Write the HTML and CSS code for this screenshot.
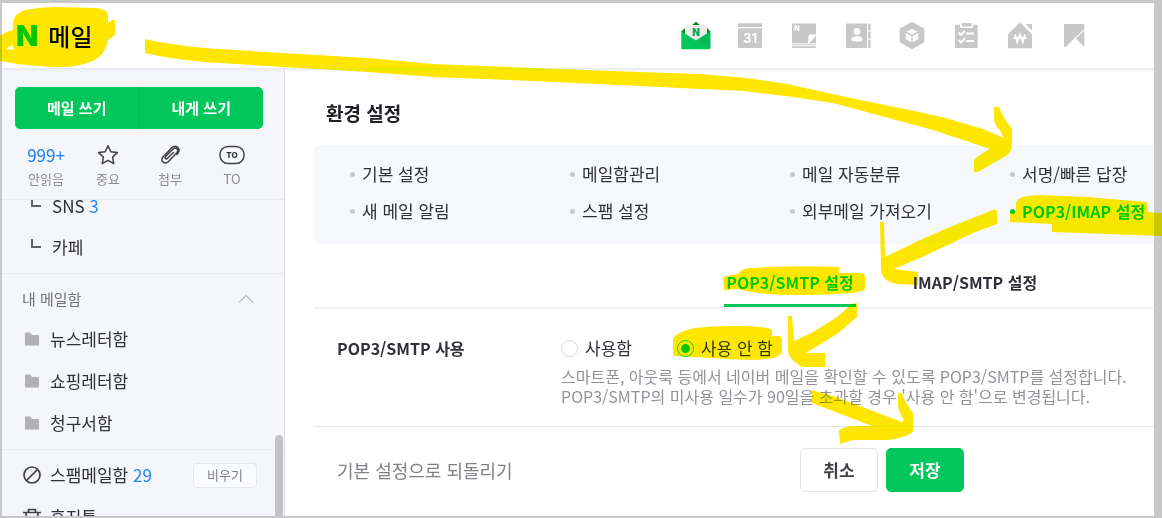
FILE: index.html
```html
<!DOCTYPE html>
<html lang="ko">
  <head>
    <meta charset="utf-8">
    <title>메일 환경 설정</title>
    <link rel="stylesheet" href="styles.css">
  </head>
  <body>
    <!-- 상단 헤더 -->
    <header class="header">
      <a class="logo" href="#"><span class="logo-mark">N</span>메일</a>
      <nav class="apps" aria-label="서비스">
        <a href="#" aria-label="메일">
          <svg viewBox="0 0 30 30">
            <path fill="#0a8a14" d="M10 5L15 .7 20 5zM.3 10.500L4 7v7zM29.300 10.500L26 7v7z"/>
            <path fill="#ececec" d="M4 5q0-1 1-1h20q1 0 1 1v10.500L15 22 4 15.500z"/>
            <path fill="#03c75a" d="M.3 10.500L15 19.500l14.300-9V27a1.300 1.300 0 0 1-1.300 1.300H1.600A1.300 1.300 0 0 1 .3 27z"/>
            <path fill="#08bd55" d="M15 19.500l14.300-9V27z"/>
            <text class="icon-n" x="15" y="15" fill="#06a850">N</text>
          </svg>
        </a>
        <a href="#" aria-label="캘린더">
          <svg viewBox="0 0 30 30">
            <path d="M3 3.300a1 1 0 0 1 1-1h22a1 1 0 0 1 1 1V6H3zM3 7.300h24V26a1 1 0 0 1-1 1H4a1 1 0 0 1-1-1z"/>
            <text class="icon-day" x="15" y="22">31</text>
          </svg>
        </a>
        <a href="#" aria-label="메모">
          <svg viewBox="0 0 30 30">
            <path d="M4 2.500h22a1 1 0 0 1 1 1v10h-6q-1.500 0-1.500 1.500l-.5 7.300H3V3.500a1 1 0 0 1 1-1zM27 14.500v7.800h-7.500q4.500-3 7.500-7.800zM3 23.300h24v.9H3zM3 25.300h24v.7a1 1 0 0 1-1 1H4a1 1 0 0 1-1-1z"/>
            <text class="icon-memo" x="8" y="10">N</text>
          </svg>
        </a>
        <a href="#" aria-label="주소록">
          <svg viewBox="0 0 30 30">
            <path d="M4 2.500h20v24.500H4a1 1 0 0 1-1-1v-22.500a1 1 0 0 1 1-1zM25.200 2.500h1.500a1 1 0 0 1 1 1v5.800h-2.500zM25.200 10.500h2.500v7h-2.500zM25.200 18.800h2.500V26a1 1 0 0 1-1 1h-1.500z"/>
            <circle cx="14" cy="10.500" r="3.400" fill="#fff"/>
            <path fill="#fff" d="M8.200 19c0-3 2.800-3.800 5.800-3.800s5.800.8 5.800 3.800c0 2.200-11.600 2.200-11.600 0z"/>
          </svg>
        </a>
        <a href="#" aria-label="마이박스">
          <svg viewBox="0 0 30 30">
            <path d="M15 .7l11.600 6.500a1.300 1.300 0 0 1 .7 1.200v12.200a1.300 1.300 0 0 1-.7 1.200L15 28.300 3.400 21.800a1.300 1.300 0 0 1-.7-1.200V8.400a1.300 1.300 0 0 1 .7-1.200z"/>
            <path fill="#fff" d="M15 8l5.600 2.700L15 13.500l-5.600-2.800zM8.700 12l5.700 2.900v6.300l-5.700-3zM21.300 12l-5.700 2.900v6.300l5.700-3z"/>
          </svg>
        </a>
        <a href="#" aria-label="할 일">
          <svg viewBox="0 0 30 30">
            <path d="M5 3.800h4V6a1 1 0 0 0 1 1h11a1 1 0 0 0 1-1V3.800h3.700a1 1 0 0 1 1 1V26a1 1 0 0 1-1 1H5a1 1 0 0 1-1-1V4.800a1 1 0 0 1 1-1zM11 2h9.500v3.500H11z"/>
            <path fill="none" stroke="#fff" stroke-width="2" d="M7.500 11.500l2.500 2.500 4-4.500M7.500 19l2.500 2.500 4-4.500M15 12.500h8M15 20h8"/>
          </svg>
        </a>
        <a href="#" aria-label="가계부">
          <svg viewBox="0 0 30 30">
            <path d="M15 1.300l12 12V26a1.300 1.300 0 0 1-1.300 1.300H4.300A1.300 1.300 0 0 1 3 26V13.300zM20.500 3H26a1 1 0 0 1 1 1v5.500z"/>
            <path fill="none" stroke="#fff" stroke-width="1.800" d="M10 13.500l2.200 7.500 2.800-7.500 2.800 7.500 2.200-7.500M8.500 17h13"/>
          </svg>
        </a>
        <a href="#" aria-label="북마크">
          <svg viewBox="0 0 30 30">
            <path d="M6 3h18.300a1 1 0 0 1 1 1v4L6.500 26 5 26.300V4a1 1 0 0 1 1-1zM25.300 9.500v16.800l-8.300-8.800z"/>
          </svg>
        </a>
      </nav>
    </header>

    <div class="content">
      <!-- 왼쪽 메뉴 -->
      <aside class="sidebar">
        <div class="write">
          <button type="button">메일 쓰기</button>
          <button type="button">내게 쓰기</button>
        </div>
        <div class="quick">
          <a href="#"><b>999+</b><span>안읽음</span></a>
          <a href="#">
            <svg viewBox="0 0 26 24"><path d="M13 2.800l2.900 6 6.500.8-4.800 4.500 1.200 6.500-5.800-3.200-5.800 3.200 1.200-6.500-4.800-4.500 6.500-.8z"/></svg>
            <span>중요</span>
          </a>
          <a href="#">
            <svg viewBox="0 0 26 24"><path d="M17 9l-6.500 6.300c-1.500 1.500-3.300-.3-1.900-1.800l7.400-7.500c3-2.700 6.400.8 3.800 3.800l-8.300 8.700c-4 3.800-8.800-.8-5.300-4.800l8.300-8.800c4.800-4.200 9.500.8 6.500 5.300l-1.500 1.800"/></svg>
            <span>첨부</span>
          </a>
          <a href="#">
            <svg viewBox="0 0 26 24"><rect x="1" y="3.500" width="24" height="17" rx="8"/><text class="icon-to" x="13" y="15">TO</text></svg>
            <span>TO</span>
          </a>
        </div>
        <div class="folders">
          <ul class="sub">
            <li><i class="branch"></i><a href="#">SNS <em>3</em></a></li>
            <li><i class="branch"></i><a href="#">카페</a></li>
          </ul>
          <section class="mine">
            <h2>내 메일함
              <svg viewBox="0 0 16 10"><path d="M1 8.500L8 1.500l7 7"/></svg>
            </h2>
            <ul>
              <li><svg class="folder" viewBox="0 0 14 14"><path d="M0 1.500Q0 .5 1 .5h4l2 2.500h6q1 0 1 1v8.500q0 1-1 1H1q-1 0-1-1z"/></svg><a href="#">뉴스레터함</a></li>
              <li><svg class="folder" viewBox="0 0 14 14"><path d="M0 1.500Q0 .5 1 .5h4l2 2.500h6q1 0 1 1v8.500q0 1-1 1H1q-1 0-1-1z"/></svg><a href="#">쇼핑레터함</a></li>
              <li><svg class="folder" viewBox="0 0 14 14"><path d="M0 1.500Q0 .5 1 .5h4l2 2.500h6q1 0 1 1v8.500q0 1-1 1H1q-1 0-1-1z"/></svg><a href="#">청구서함</a></li>
            </ul>
          </section>
          <ul class="etc">
            <li>
              <svg class="line-icon" viewBox="0 0 18 18"><circle cx="9" cy="9" r="8"/><path d="M3.500 14.500l11-11"/></svg>
              <a href="#">스팸메일함 <em>29</em></a>
              <button type="button" class="empty">비우기</button>
            </li>
            <li>
              <svg class="line-icon" viewBox="0 0 18 18"><path d="M0 4.500h18M5.500 4V1.500h7V4M3 5l1 12h10l1-12M7 8v6M11 8v6"/></svg>
              <a href="#">휴지통</a>
            </li>
          </ul>
          <div class="scrollbar"></div>
        </div>
      </aside>

      <!-- 환경 설정 -->
      <main class="settings">
        <h1>환경 설정</h1>
        <ul class="menu">
          <li><a href="#">기본 설정</a></li>
          <li><a href="#">메일함관리</a></li>
          <li><a href="#">메일 자동분류</a></li>
          <li><a href="#">서명/빠른 답장</a></li>
          <li><a href="#">새 메일 알림</a></li>
          <li><a href="#">스팸 설정</a></li>
          <li><a href="#">외부메일 가져오기</a></li>
          <li class="on"><a href="#">POP3/IMAP 설정</a></li>
        </ul>
        <nav class="tabs">
          <a href="#" class="on">POP3/SMTP 설정</a>
          <a href="#">IMAP/SMTP 설정</a>
        </nav>
        <form>
          <div class="field" role="radiogroup" aria-labelledby="pop-label">
            <strong id="pop-label">POP3/SMTP 사용</strong>
            <div class="value">
              <div class="options">
                <input type="radio" name="pop" id="pop-on"><label for="pop-on">사용함</label>
                <input type="radio" name="pop" id="pop-off" checked><label for="pop-off">사용 안 함</label>
              </div>
              <p>스마트폰, 아웃룩 등에서 네이버 메일을 확인할 수 있도록 POP3/SMTP를 설정합니다.<br>POP3/SMTP의 미사용 일수가 90일을 초과할 경우 '사용 안 함'으로 변경됩니다.</p>
            </div>
          </div>
          <div class="actions">
            <a href="#">기본 설정으로 되돌리기</a>
            <button type="button">취소</button>
            <button type="submit" class="save">저장</button>
          </div>
        </form>
      </main>
    </div>

    <!-- 형광펜 표시 -->
    <svg class="marker" viewBox="0 0 1162 518" preserveAspectRatio="none" aria-hidden="true">
      <path d="M13 28V22Q15 13 25 10 40 7 55 7L97 8Q108 10 108 14V23L112 20H115V35L108 40Q106 53 95 60 82 66 65 67 30 67 0 61V36Q7 31 13 30zM6 49L14 50 12 45z"/>
      <path d="M145 39Q165 44 204 48L283 53 368 58 433 64 533 68 640 72 700 74 747 78 787 84 860 100 900 108 942 117 983 129 1004 138 999 129 Q994 125 994 118V107H999Q1002 116 1012 129V147Q1011 153 1004 157 L978 172H974V160Q977 156 990 149L933 130 833 103 793 97 743 91 660 87 533 81 433 77 368 72 283 67 204 62Q170 59 145 53z"/>
      <path d="M1010 212L1016 211 1016 204Q1017 197 1027 196L1040 195 1087 197 1147 202V212L1162 213V236L1052 232V224L1010 222z"/>
      <path d="M880 222H884L885 257 920 240 950 227 993 210H997V224L973 233 920 258 894 269 918 272V285L897 284Q881 281 881 269z"/>
      <path d="M723 277L738 274Q740 269 750 268 795 265 839 267V273H859Q865 273 865 277V289Q861 292 853 293 800 297 757 293L737 289 724 290z"/>
      <path d="M673 338Q679 331 695 328 710 326 733 326 769 326 772 330V336L780 336 782 338V353Q779 356 774 358 755 361 727 359L676 356 673 355z"/>
      <path d="M788 316H792L794 341 813 332 837 317 852 304 857 303V317L837 334 806 353H825V367H803Q788 360 788 349z"/>
      <path d="M812 390L833 396 902 422 904 420Q898 411 898 404V393H902Q904 401 913 413V432Q905 438 888 440H853L840 444 839 430Q845 426 855 426H872L812 403z"/>
    </svg>
  </body>
</html>
```
FILE: styles.css
```css
* {
  box-sizing: border-box;
}

body {
  display: flex;
  flex-direction: column;
  height: 100vh;
  margin: 0;
  border: solid #c8c8c8;
  border-width: 3px 8px 2px 2px;
  background: #fff;
  color: #303038;
  font-family: "Noto Sans CJK KR", sans-serif;
  font-size: 17px;
  line-height: 24px;
}

a {
  color: inherit;
  text-decoration: none;
}

ul {
  margin: 0;
  padding: 0;
  list-style: none;
}

button {
  padding: 0;
  font: inherit;
}

em {
  color: #1f87f0;
  font-style: normal;
}

/* 헤더 */
.header {
  display: flex;
  flex: none;
  align-items: center;
  justify-content: space-between;
  height: 65px;
  padding: 0 65px 0 14px;
}

.logo {
  display: flex;
  align-items: center;
  gap: 10px;
  color: #000;
  font-size: 24px;
  font-weight: 500;
}

.logo-mark {
  color: #03c75a;
  font-family: Inter, sans-serif;
  font-size: 29px;
  font-weight: 900;
}

.apps {
  display: flex;
  gap: 24px;
}

.apps svg {
  display: block;
  width: 30px;
  height: 30px;
  fill: #c8c8c8;
}

.apps text {
  font-family: Inter, sans-serif;
  font-weight: 800;
  text-anchor: middle;
}

.apps .icon-n {
  font-size: 10px;
  font-weight: 900;
}

.apps .icon-day {
  fill: #fff;
  font-size: 13px;
  font-weight: 700;
}

.apps .icon-memo {
  fill: #fff;
  font-size: 7px;
}

/* 본문 */
.content {
  display: flex;
  flex: 1;
  min-height: 0;
  box-shadow: inset 0 4px 3px -2px #e6e8f0;
}

/* 왼쪽 메뉴 */
.sidebar {
  display: flex;
  flex: none;
  flex-direction: column;
  width: 283px;
  border-right: 1px solid #dcdce0;
  background: #f5f6fa;
  box-shadow: inset 0 4px 3px -2px #e6e8f0;
}

.write {
  display: flex;
  margin: 19px 21px 0 13px;
}

.write button {
  flex: 1;
  height: 42px;
  border: 0;
  border-radius: 5px 0 0 5px;
  background: #03c75a;
  color: #fff;
  font-size: 15px;
  font-weight: 700;
}

.write button + button {
  border-left: 1px solid #04b452;
  border-radius: 0 5px 5px 0;
}

.quick {
  display: flex;
  height: 71px;
  padding: 14px 21px 0 13px;
  border-bottom: 1px solid #ebecf0;
}

.quick a {
  display: flex;
  flex: 1;
  flex-direction: column;
  align-items: center;
  color: #8c8c92;
  font-size: 13px;
}

.quick b {
  color: #1f7ff0;
  font-size: 17px;
  font-weight: 400;
}

.quick svg {
  width: 26px;
  height: 24px;
  fill: none;
  stroke: #404046;
  stroke-width: 1.5;
  stroke-linejoin: round;
}

.quick .icon-to {
  fill: #303038;
  stroke: none;
  font-family: Inter, sans-serif;
  font-size: 8px;
  font-weight: 800;
  text-anchor: middle;
}

.folders {
  position: relative;
  flex: 1;
  min-height: 0;
  overflow: hidden;
}

.folders li {
  display: flex;
  align-items: center;
  height: 42px;
  padding: 0 27px 0 21px;
}

.sub {
  margin-top: -15px;
  padding-bottom: 6px;
  border-bottom: 1px solid #ebecf0;
}

.folders .sub li {
  height: 41px;
  padding-left: 29px;
}

.branch {
  width: 10px;
  height: 9px;
  margin: 0 11px 6px 0;
  border: solid #606068;
  border-width: 0 0 2px 2px;
}

.mine {
  padding-bottom: 5px;
  border-bottom: 1px solid #ebecf0;
}

.mine h2 {
  display: flex;
  align-items: center;
  justify-content: space-between;
  height: 44px;
  margin: 0;
  padding: 6px 30px 0 20px;
  color: #707078;
  font-size: 15px;
  font-weight: 400;
}

.mine h2 svg {
  width: 16px;
  height: 10px;
  fill: none;
  stroke: #909096;
}

.folder {
  width: 14px;
  height: 14px;
  margin: 0 11px 0 2px;
  fill: #b0b0b6;
}

.etc {
  padding-top: 4px;
}

.line-icon {
  width: 18px;
  height: 18px;
  margin-right: 9px;
  fill: none;
  stroke: #404046;
  stroke-width: 1.700;
}

.empty {
  width: 64px;
  height: 25px;
  margin-left: auto;
  border: 1px solid #e8e8ec;
  border-radius: 4px;
  background: #fafbfd;
  color: #808086;
  font-size: 13px;
  line-height: 20px;
}

.scrollbar {
  position: absolute;
  right: 1px;
  bottom: 0;
  width: 8px;
  height: 81px;
  border-radius: 4px 4px 0 0;
  background: #c2c3c6;
}

/* 환경 설정 */
.settings {
  flex: 1;
  min-width: 0;
  padding: 33px 0 0 29px;
}

.settings h1 {
  margin: 0 0 20px 12px;
  color: #202026;
  font-size: 19px;
  font-weight: 700;
  line-height: 24px;
}

.menu {
  display: grid;
  grid-template-columns: repeat(3, 1fr) 144px;
  gap: 13px 0;
  padding: 17px 0 21px 36px;
  border-radius: 6px 0 0 6px;
  background: #f7f8fc;
  white-space: nowrap;
}

.menu li {
  display: flex;
  align-items: center;
  gap: 7px;
}

.menu li::before {
  width: 5px;
  height: 5px;
  border-radius: 50%;
  background: #c8c8d2;
  content: "";
}

.menu .on {
  color: #03c75a;
  font-size: 16px;
  font-weight: 700;
}

.menu .on::before {
  background: #03c75a;
}

.tabs {
  display: flex;
  justify-content: flex-end;
  gap: 53px;
  height: 65px;
  padding-right: 113px;
  border-bottom: 2px solid #f2f2f5;
  font-size: 16px;
  font-weight: 700;
}

.tabs a {
  width: 132px;
  padding-top: 26px;
  text-align: center;
  white-space: nowrap;
}

.tabs .on {
  border-bottom: 3px solid #03c75a;
  color: #03c75a;
}

.field {
  display: flex;
  height: 118px;
  padding: 27px 0 0 23px;
  border-bottom: 1px solid #e4e4e8;
}

.field strong {
  width: 224px;
  font-size: 16px;
}

.options {
  display: flex;
  align-items: center;
}

.options input {
  appearance: none;
  width: 17px;
  height: 17px;
  margin: 0 7px 0 0;
  border: 1px solid #d4d6e6;
  border-radius: 50%;
  background: #fff;
}

.options input:checked {
  border: 1px solid #03c75a;
  background: radial-gradient(#03c75a 4px, #fff 5px);
}

.options label {
  margin-right: 45px;
}

.field p {
  margin: 6px 0 0;
  color: #929298;
  font-size: 16px;
  line-height: 20px;
  white-space: nowrap;
}

.actions {
  display: flex;
  align-items: center;
  gap: 8px;
  padding: 21px 190px 0 23px;
}

.actions a {
  margin-right: auto;
  color: #808086;
  font-size: 18px;
}

.actions button {
  width: 78px;
  height: 44px;
  border: 1px solid #e2e2e6;
  border-radius: 5px;
  background: #fff;
  color: #404046;
  font-weight: 700;
}

.actions .save {
  border-color: #03c75a;
  background: #03c75a;
  color: #fff;
}

/* 형광펜은 테두리 위까지 덮는다 */
.marker {
  position: absolute;
  top: 0;
  left: 0;
  width: 100%;
  height: 100%;
  fill: #ffe600;
  mix-blend-mode: darken;
  pointer-events: none;
}
```
